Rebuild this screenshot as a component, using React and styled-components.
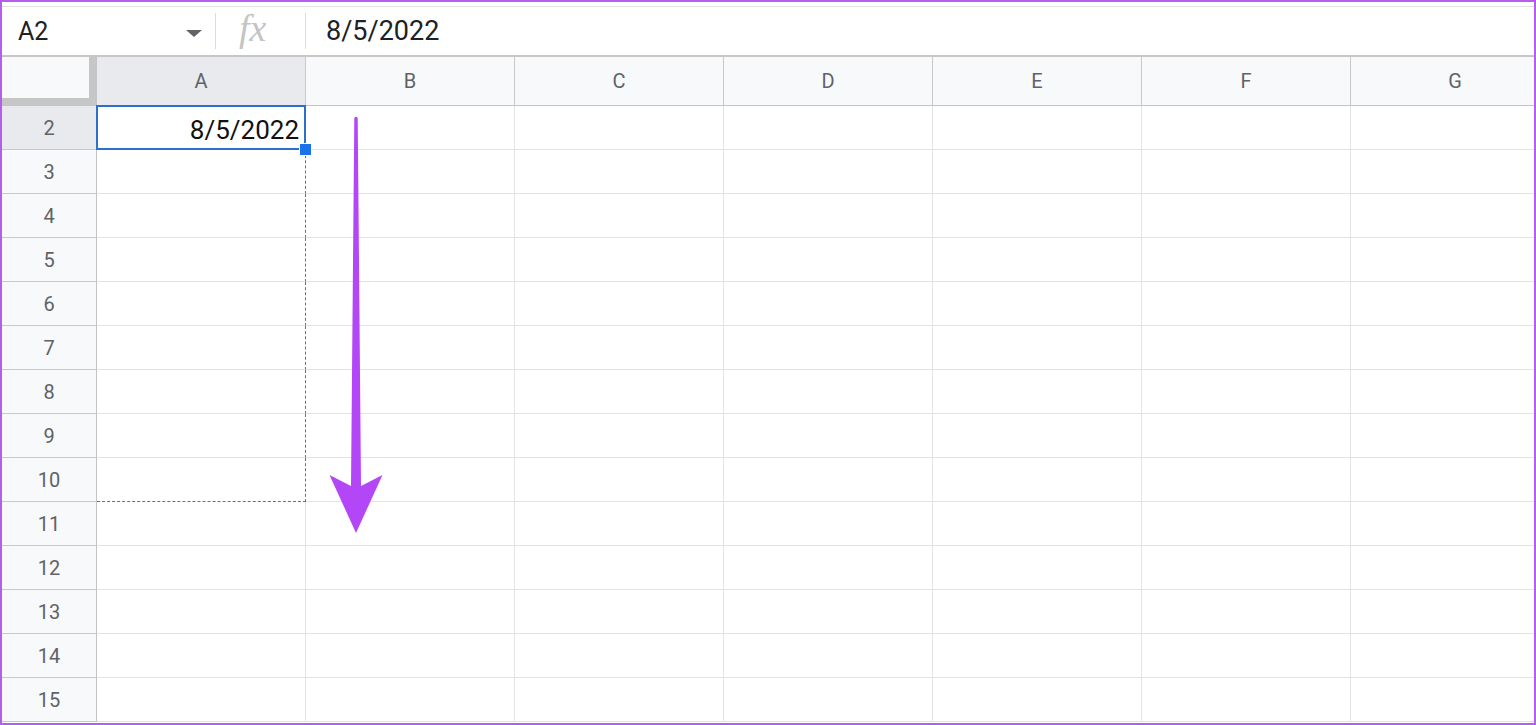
import React from 'react';
import styled, { createGlobalStyle } from 'styled-components';

const GlobalStyle = createGlobalStyle`
  html, body {
    margin: 0;
    padding: 0;
    background: #fff;
  }
  body {
    font-family: Roboto, "Liberation Sans", Arial, sans-serif;
  }
`;

const Frame = styled.div`
  position: relative;
  width: 1536px;
  height: 725px;
  box-sizing: border-box;
  border: 2px solid #b45ef0;
  overflow: hidden;
  background: #fff;
`;

const TopStrip = styled.div`
  height: 4px;
  border-bottom: 1px solid #e3e3e3;
`;

const FormulaBar = styled.div`
  display: flex;
  align-items: center;
  height: 48px;
  border-bottom: 2px solid #c6c6c6;
`;

const NameBox = styled.div`
  display: flex;
  align-items: center;
  justify-content: space-between;
  box-sizing: border-box;
  width: 212px;
  padding: 0 12px 0 16px;
  font-size: 25px;
  color: #202124;
`;

const Caret = styled.span`
  width: 0;
  height: 0;
  border-left: 8px solid transparent;
  border-right: 8px solid transparent;
  border-top: 7px solid #5f6368;
  margin-top: 4px;
`;

const Divider = styled.div`
  width: 1px;
  height: 36px;
  background: #dadce0;
  margin-left: ${p => p.gap || 0}px;
`;

const Fx = styled.div`
  width: 89px;
  padding-left: 23px;
  box-sizing: border-box;
  font-family: "Liberation Serif", "DejaVu Serif", serif;
  font-style: italic;
  font-size: 38px;
  color: #c4c4c4;
  margin-top: -6px;
`;

const FormulaValue = styled.div`
  padding-left: 20px;
  font-size: 27px;
  color: #202124;
`;

const Sheet = styled.div`
  display: grid;
  grid-template-columns: 95px repeat(7, 209px);
  grid-template-rows: 49px;
  grid-auto-rows: 44px;
`;

const Corner = styled.div`
  background: #f8f9fa;
  border-right: 1px solid #c4c4c4;
  border-bottom: 1px solid #c4c4c4;
  box-shadow: inset -7px -7px 0 0 #c6c6c6;
  box-sizing: border-box;
`;

const ColHeader = styled.div`
  display: flex;
  align-items: center;
  justify-content: center;
  box-sizing: border-box;
  background: ${p => (p.active ? '#e8eaed' : '#f8f9fa')};
  border-right: 1px solid #c9c9c9;
  border-bottom: 1px solid #c4c4c4;
  font-size: 20px;
  color: #5f6368;
`;

const RowHeader = styled.div`
  display: flex;
  align-items: center;
  justify-content: center;
  box-sizing: border-box;
  background: ${p => (p.active ? '#e8eaed' : '#f8f9fa')};
  border-right: 1px solid #c4c4c4;
  border-bottom: 1px solid #c9c9c9;
  font-size: 20px;
  color: #5f6368;
`;

const Cell = styled.div`
  position: relative;
  box-sizing: border-box;
  border-right: 1px ${p => (p.dashRight ? 'dashed #6f6f6f' : 'solid #e2e3e3')};
  border-bottom: 1px ${p => (p.dashBottom ? 'dashed #6f6f6f' : 'solid #e2e3e3')};
`;

const SelectedCell = styled.div`
  position: relative;
  display: flex;
  align-items: center;
  justify-content: flex-end;
  box-sizing: border-box;
  border: 2px solid #2b6fd0;
  margin: -1px 0 0 -1px;
  padding: 4px 5px 0 0;
  font-size: 26px;
  color: #111;
`;

const Handle = styled.span`
  position: absolute;
  right: -8px;
  bottom: -8px;
  width: 11px;
  height: 11px;
  background: #1a73e8;
  border: 1px solid #fff;
  z-index: 2;
`;

const Arrow = styled.svg`
  position: absolute;
  left: 326px;
  top: 112px;
  pointer-events: none;
`;

const columns = ['A', 'B', 'C', 'D', 'E', 'F', 'G'];
const rows = [2, 3, 4, 5, 6, 7, 8, 9, 10, 11, 12, 13, 14, 15];

export default function App() {
  return (
    <>
      <GlobalStyle />
      <Frame>
        <TopStrip />
        <FormulaBar>
          <NameBox>
            A2
            <Caret />
          </NameBox>
          <Divider gap={1} />
          <Fx>fx</Fx>
          <Divider />
          <FormulaValue>8/5/2022</FormulaValue>
        </FormulaBar>
        <Sheet>
          <Corner />
          {columns.map(c => (
            <ColHeader key={c} active={c === 'A'}>{c}</ColHeader>
          ))}
          {rows.map(r => (
            <React.Fragment key={r}>
              <RowHeader active={r === 2}>{r}</RowHeader>
              {columns.map(c => {
                if (c === 'A' && r === 2) {
                  return (
                    <SelectedCell key={c}>
                      8/5/2022
                      <Handle />
                    </SelectedCell>
                  );
                }
                const inFill = c === 'A' && r > 2 && r <= 10;
                return (
                  <Cell
                    key={c}
                    dashRight={inFill}
                    dashBottom={c === 'A' && r === 10}
                  />
                );
              })}
            </React.Fragment>
          ))}
        </Sheet>
        <Arrow width="60" height="424" viewBox="328 114 60 424">
          <path
            d="M354.3 118 Q356 115.5 357.7 118 L361 486 L382.5 475 L356 533 L329.5 475 L351 486 Z"
            fill="#b347f7"
          />
        </Arrow>
      </Frame>
    </>
  );
}
